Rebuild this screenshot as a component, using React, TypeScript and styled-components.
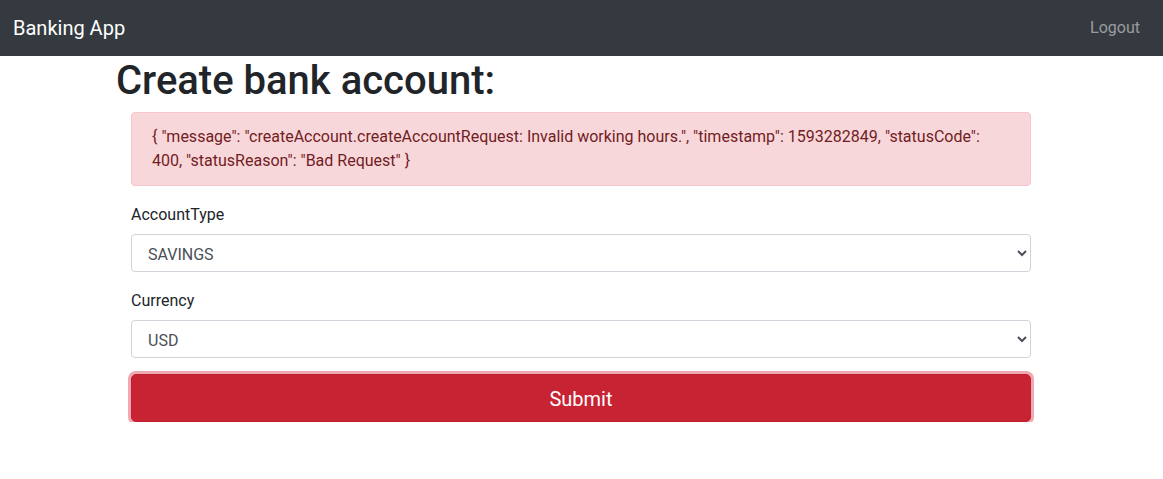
import React from "react";
import styled, { createGlobalStyle } from "styled-components";

const Global = createGlobalStyle`
  * { box-sizing: border-box; }
  body {
    margin: 0;
    font-family: Roboto, "Liberation Sans", Arial, sans-serif;
    font-size: 16px;
    line-height: 1.5;
    color: #212529;
    background: #fff;
  }
`;

const Navbar = styled.nav`
  height: 56px;
  background: #343a40;
  display: flex;
  align-items: center;
  justify-content: space-between;
  padding: 0 15px 0 13px;
`;

const Brand = styled.a`
  color: #fff;
  font-size: 20px;
  line-height: 30px;
  text-decoration: none;
`;

const NavLink = styled.a`
  color: rgba(255, 255, 255, 0.5);
  font-size: 16px;
  line-height: 24px;
  padding: 8px;
  text-decoration: none;
`;

const Container = styled.main`
  width: 960px;
  margin-left: calc((100% - 961px) / 2);
  padding: 0 15px;
`;

const Title = styled.h1`
  margin: 0 0 8px;
  padding-top: 1px;
  font-size: 40px;
  font-weight: 500;
  line-height: 47px;
`;

const Form = styled.form`
  padding: 0 15px;
`;

const Alert = styled.div`
  padding: 12px 20px;
  margin-bottom: 16px;
  border: 1px solid #f5c6cb;
  border-radius: 4px;
  background: #f8d7da;
  color: #721c24;
`;

const Group = styled.div`
  margin-bottom: 16px;
`;

const Label = styled.label`
  display: block;
  margin-bottom: 7px;
  padding-top: 1px;
`;

const Select = styled.select`
  display: block;
  width: 100%;
  height: 38px;
  padding: 7px 12px 5px;
  font-family: inherit;
  font-size: 16px;
  line-height: 1.5;
  color: #495057;
  background: #fff;
  border: 1px solid #ced4da;
  border-radius: 4px;
`;

const Button = styled.button`
  display: block;
  width: 100%;
  padding: 9px 16px 7px;
  font-family: inherit;
  font-size: 20px;
  line-height: 1.5;
  color: #fff;
  background: #c82333;
  border: 1px solid #bd2130;
  border-radius: 5px;
  box-shadow: 0 0 0 3px rgba(225, 83, 97, 0.5);
  cursor: pointer;
`;

export default function App() {
  return (
    <>
      <Global />
      <Navbar>
        <Brand href="#">Banking App</Brand>
        <NavLink href="#">Logout</NavLink>
      </Navbar>
      <Container>
        <Title>Create bank account:</Title>
        <Form onSubmit={(e) => e.preventDefault()}>
          <Alert>
            {'{ "message": "createAccount.createAccountRequest: Invalid working hours.", "timestamp": 1593282849, "statusCode": 400, "statusReason": "Bad Request" }'}
          </Alert>
          <Group>
            <Label>AccountType</Label>
            <Select defaultValue="SAVINGS">
              <option>SAVINGS</option>
              <option>CHECKING</option>
            </Select>
          </Group>
          <Group>
            <Label>Currency</Label>
            <Select defaultValue="USD">
              <option>USD</option>
              <option>EUR</option>
            </Select>
          </Group>
          <Button type="submit">Submit</Button>
        </Form>
      </Container>
    </>
  );
}
